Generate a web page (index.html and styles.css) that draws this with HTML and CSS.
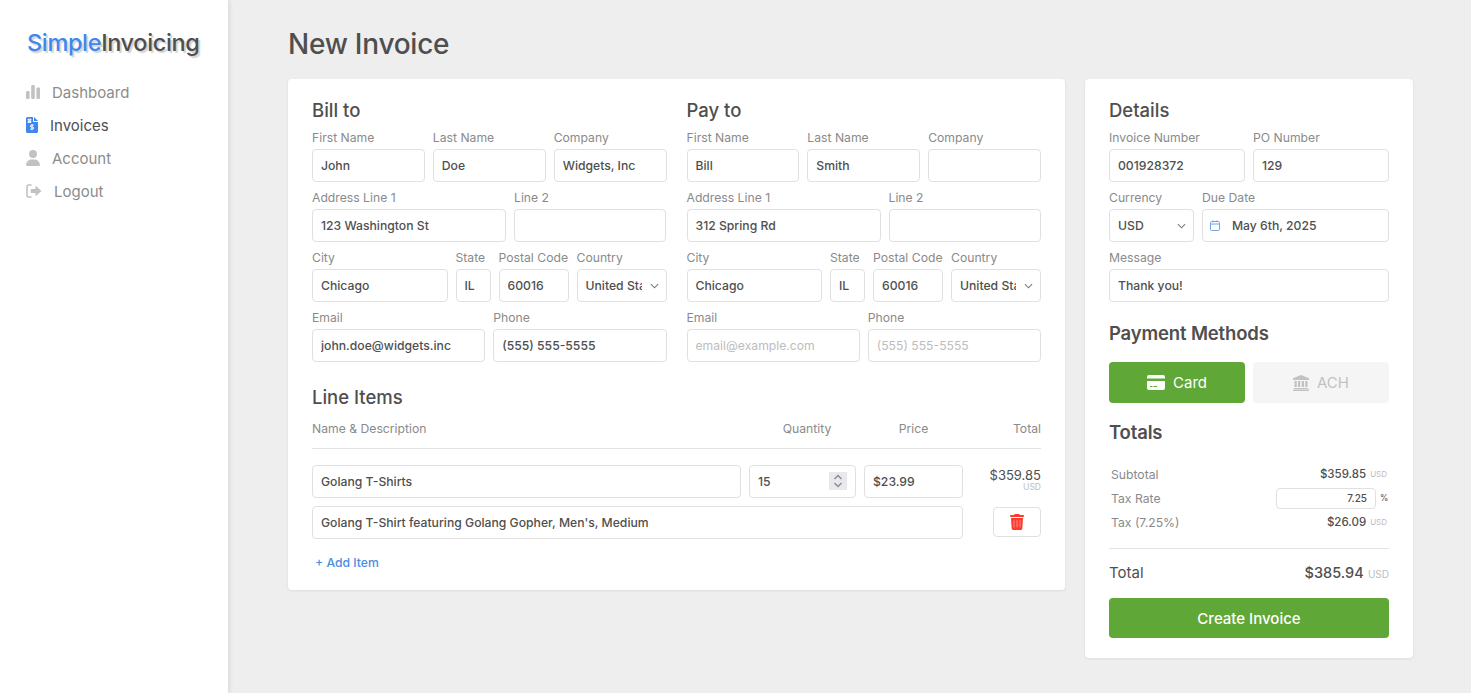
FILE: index.html
```html
<!DOCTYPE html>
<html lang="en">
<head>
    <meta charset="UTF-8">
    <meta name="viewport" content="width=device-width, initial-scale=1.0">
    <title>New Invoice - SimpleInvoicing</title>
    <link rel="stylesheet" href="styles.css">
</head>
<body>
    <aside class="sidebar">
        <div class="logo"><span class="logo-blue">Simple</span>Invoicing</div>
        <nav class="nav">
            <a class="nav-item">
                <svg class="nav-icon icon-chart" viewBox="0 0 14 14"><rect x="0" y="6" width="3.6" height="8" rx="1.2"/><rect x="5.2" y="0" width="3.6" height="14" rx="1.2"/><rect x="10.4" y="2.5" width="3.6" height="11.5" rx="1.2"/></svg>
                Dashboard
            </a>
            <a class="nav-item active">
                <svg class="nav-icon icon-file" viewBox="0 0 12 16"><path d="M1.5 0H7v4a1 1 0 0 0 1 1h4v9.5a1.5 1.5 0 0 1-1.5 1.5h-9A1.5 1.5 0 0 1 0 14.500V1.500A1.500 1.500 0 0 1 1.500 0zM8 0l4 4H8z"/><path class="file-mark" d="M2 2.200h3v1H2zM2 4.400h3v1H2zM7.700 8.100H5.400a.8.8 0 0 0 0 2h1.200a.8.8 0 0 1 0 2H4.300M6 7v6.200" /></svg>
                Invoices
            </a>
            <a class="nav-item">
                <svg class="nav-icon icon-user" viewBox="0 0 448 512"><path d="M224 256A128 128 0 1 0 224 0a128 128 0 1 0 0 256zm-45.700 48C79.800 304 0 383.800 0 482.300C0 498.700 13.300 512 29.700 512H418.300c16.400 0 29.700-13.300 29.700-29.700C448 383.800 368.200 304 269.700 304H178.300z"/></svg>
                Account
            </a>
            <a class="nav-item">
                <svg class="nav-icon icon-logout" viewBox="0 0 16 14"><path d="M5 1H2.500A1.500 1.500 0 0 0 1 2.500v9A1.500 1.500 0 0 0 2.500 13H5" fill="none" stroke="currentColor" stroke-width="1.600" stroke-linecap="round"/><path d="M10.200 2.300 15.500 7l-5.300 4.700a.5.5 0 0 1-.8-.4V9H5.500a.8.8 0 0 1-.8-.8V5.800a.8.8 0 0 1 .8-.8h3.900V2.700a.5.5 0 0 1 .8-.4z"/></svg>
                Logout
            </a>
        </nav>
    </aside>

    <main class="main">
        <h1>New Invoice</h1>
        <div class="layout">
            <section class="card card-main">
                <div class="parties">
                    <div>
                        <h2>Bill to</h2>
                        <div class="row cols-3">
                            <div class="field"><label>First Name</label><input type="text" value="John"></div>
                            <div class="field"><label>Last Name</label><input type="text" value="Doe"></div>
                            <div class="field"><label>Company</label><input type="text" value="Widgets, Inc"></div>
                        </div>
                        <div class="row cols-addr">
                            <div class="field"><label>Address Line 1</label><input type="text" value="123 Washington St"></div>
                            <div class="field"><label>Line 2</label><input type="text"></div>
                        </div>
                        <div class="row cols-city">
                            <div class="field"><label>City</label><input type="text" value="Chicago"></div>
                            <div class="field"><label>State</label><input type="text" value="IL"></div>
                            <div class="field"><label>Postal Code</label><input type="text" value="60016"></div>
                            <div class="field"><label>Country</label>
                                <div class="select-wrap">
                                    <select><option>United States</option></select>
                                    <svg class="chevron" viewBox="0 0 10 6"><path d="M1 1l4 4 4-4"/></svg>
                                </div>
                            </div>
                        </div>
                        <div class="row cols-2">
                            <div class="field"><label>Email</label><input type="text" value="john.doe@widgets.inc"></div>
                            <div class="field"><label>Phone</label><input type="text" value="(555) 555-5555"></div>
                        </div>
                    </div>
                    <div>
                        <h2>Pay to</h2>
                        <div class="row cols-3">
                            <div class="field"><label>First Name</label><input type="text" value="Bill"></div>
                            <div class="field"><label>Last Name</label><input type="text" value="Smith"></div>
                            <div class="field"><label>Company</label><input type="text"></div>
                        </div>
                        <div class="row cols-addr">
                            <div class="field"><label>Address Line 1</label><input type="text" value="312 Spring Rd"></div>
                            <div class="field"><label>Line 2</label><input type="text"></div>
                        </div>
                        <div class="row cols-city">
                            <div class="field"><label>City</label><input type="text" value="Chicago"></div>
                            <div class="field"><label>State</label><input type="text" value="IL"></div>
                            <div class="field"><label>Postal Code</label><input type="text" value="60016"></div>
                            <div class="field"><label>Country</label>
                                <div class="select-wrap">
                                    <select><option>United States</option></select>
                                    <svg class="chevron" viewBox="0 0 10 6"><path d="M1 1l4 4 4-4"/></svg>
                                </div>
                            </div>
                        </div>
                        <div class="row cols-2">
                            <div class="field"><label>Email</label><input type="text" placeholder="email@example.com"></div>
                            <div class="field"><label>Phone</label><input type="text" placeholder="(555) 555-5555"></div>
                        </div>
                    </div>
                </div>

                <h2 class="line-title">Line Items</h2>
                <div class="line-head">
                    <span>Name &amp; Description</span>
                    <span class="head-qty">Quantity</span>
                    <span class="head-price">Price</span>
                    <span class="head-total">Total</span>
                </div>
                <div class="line-item">
                    <input type="text" value="Golang T-Shirts">
                    <div class="qty-wrap">
                        <input type="text" value="15">
                        <svg class="spinner" viewBox="0 0 18 18"><path d="M5.500 7 9 3.500 12.500 7M5.500 11 9 14.500 12.500 11"/></svg>
                    </div>
                    <input type="text" value="$23.99">
                    <div class="line-total">
                        <div class="line-amount">$359.85</div>
                        <div class="currency-note">USD</div>
                    </div>
                    <input class="line-desc" type="text" value="Golang T-Shirt featuring Golang Gopher, Men's, Medium">
                    <button class="delete-btn" type="button">
                        <svg viewBox="0 0 448 512"><path d="M135.200 17.700L128 32H32C14.300 32 0 46.300 0 64S14.300 96 32 96H416c17.700 0 32-14.300 32-32s-14.300-32-32-32H320l-7.200-14.300C307.400 6.800 296.300 0 284.200 0H163.800c-12.100 0-23.200 6.800-28.600 17.700zM416 128H32L53.200 467c1.600 25.300 22.600 45 47.900 45H346.900c25.300 0 46.300-19.700 47.900-45L416 128z"/><path class="trash-lines" d="M128 200v230M224 200v230M320 200v230"/></svg>
                    </button>
                </div>
                <a class="add-item">+ Add Item</a>
            </section>

            <section class="card card-side">
                <h2>Details</h2>
                <div class="row cols-2">
                    <div class="field"><label>Invoice Number</label><input type="text" value="001928372"></div>
                    <div class="field"><label>PO Number</label><input type="text" value="129"></div>
                </div>
                <div class="row cols-due">
                    <div class="field"><label>Currency</label>
                        <div class="select-wrap">
                            <select><option>USD</option></select>
                            <svg class="chevron" viewBox="0 0 10 6"><path d="M1 1l4 4 4-4"/></svg>
                        </div>
                    </div>
                    <div class="field"><label>Due Date</label>
                        <div class="date-wrap">
                            <svg class="calendar" viewBox="0 0 10 11"><rect x=".5" y="1.500" width="9" height="9" rx="1.200"/><path d="M.5 4h9M3 .3v2M7 .3v2"/></svg>
                            <input type="text" value="May 6th, 2025">
                        </div>
                    </div>
                </div>
                <div class="row">
                    <div class="field"><label>Message</label><input type="text" value="Thank you!"></div>
                </div>

                <h2 class="payment-title">Payment Methods</h2>
                <div class="pay-buttons">
                    <button class="pay-btn pay-active" type="button">
                        <svg class="pay-icon" viewBox="0 0 18 15"><path d="M2 0h14a2 2 0 0 1 2 2v1.500H0V2a2 2 0 0 1 2-2zM0 6h18v7a2 2 0 0 1-2 2H2a2 2 0 0 1-2-2zM3 11v1h2.500v-1zm3.500 0v1H10v-1z" fill-rule="evenodd"/></svg>
                        Card
                    </button>
                    <button class="pay-btn" type="button">
                        <svg class="bank-icon" viewBox="0 0 16 16"><path d="M8 0l8 3.300V5H0V3.300zM1.500 6h2.300v6H1.500zM5 6h2.300v6H5zm3.700 0H11v6H8.700zm3.500 0h2.300v6h-2.300zM1 13h14v1H1zM0 14.600h16V16H0z"/></svg>
                        ACH
                    </button>
                </div>

                <h2 class="totals-title">Totals</h2>
                <div class="totals">
                    <div class="totals-row">
                        <span>Subtotal</span>
                        <span class="totals-value">$359.85 <small>USD</small></span>
                    </div>
                    <div class="totals-row">
                        <span>Tax Rate</span>
                        <span class="totals-value"><input class="tax-input" type="text" value="7.25"> <small class="percent">%</small></span>
                    </div>
                    <div class="totals-row">
                        <span>Tax (7.25%)</span>
                        <span class="totals-value">$26.09 <small>USD</small></span>
                    </div>
                </div>
                <div class="grand-total">
                    <span>Total</span>
                    <span><strong>$385.94</strong> <small>USD</small></span>
                </div>
                <button class="create-btn" type="button">Create Invoice</button>
            </section>
        </div>
    </main>
</body>
</html>
```

FILE: styles.css
```css
* {
    box-sizing: border-box;
}
body {
    font-family: Inter, "Noto Sans", sans-serif;
    margin: 0;
    height: 693px;
    overflow: hidden;
    display: flex;
    background-color: #eeeeee;
    color: #4f4f4f;
}
.sidebar {
    width: 228px;
    flex-shrink: 0;
    background: white;
    box-shadow: 2px 0 4px rgba(0, 0, 0, 0.08);
    padding: 29px 0 0 26px;
}
.logo {
    font-size: 23.5px;
    line-height: 28px;
    font-weight: 500;
    letter-spacing: -0.35px;
    margin-left: 1px;
    text-shadow: 2px 2px 1px #d4d4d4;
}
.logo-blue {
    color: #3f86ee;
}
.nav {
    margin-top: 23px;
    display: flex;
    flex-direction: column;
    gap: 9px;
}
.nav-item {
    display: flex;
    align-items: center;
    gap: 12px;
    height: 24px;
    font-size: 15px;
    color: #8c8c8c;
}
.nav-item.active {
    color: #4f4f4f;
}
.nav-icon {
    fill: #c2c2c2;
    color: #c2c2c2;
    flex-shrink: 0;
}
.icon-chart {
    width: 14px;
    height: 14px;
}
.icon-file {
    width: 12px;
    height: 16px;
    fill: #3f86ee;
}
.file-mark {
    fill: none;
    stroke: white;
    stroke-width: 1;
}
.icon-user {
    width: 14px;
    height: 16px;
}
.icon-logout {
    width: 16px;
    height: 14px;
}
.main {
    flex: 1;
    padding: 25px 58px 0 60px;
    min-width: 0;
}
h1 {
    font-size: 28px;
    line-height: 38px;
    font-weight: 500;
    margin: 0 0 16px;
    letter-spacing: -0.25px;
}
h2 {
    font-size: 18.5px;
    line-height: 24px;
    font-weight: 500;
    margin: 0 0 7px;
}
.layout {
    display: flex;
    align-items: flex-start;
    gap: 20px;
}
.card {
    background: white;
    border-radius: 4px;
    box-shadow: 0 1px 3px rgba(0, 0, 0, 0.08);
    padding: 19px 24px 20px;
}
.card-main {
    width: 777px;
    height: 511px;
}
.card-side {
    width: 328px;
    height: 579px;
}
.parties {
    display: grid;
    grid-template-columns: 1fr 1fr;
    gap: 20px;
}
.row {
    display: grid;
    gap: 8px;
    margin-bottom: 7px;
}
.cols-3 {
    grid-template-columns: 1fr 1fr 1fr;
}
.cols-2 {
    grid-template-columns: 1fr 1fr;
}
.cols-addr {
    grid-template-columns: 56fr 44fr;
}
.cols-city {
    grid-template-columns: 1fr 35px 70px 90px;
}
.cols-due {
    grid-template-columns: 85px 1fr;
}
.field {
    min-width: 0;
}
label {
    display: block;
    font-size: 12.2px;
    line-height: 16px;
    padding-top: 1px;
    margin-bottom: 3px;
    color: #8a8a8a;
    white-space: nowrap;
}
input, select {
    font-family: inherit;
    width: 100%;
    height: 33px;
    border: 1px solid #e0e0e0;
    border-radius: 4px;
    padding: 0 8px;
    font-size: 12.2px;
    font-weight: 500;
    color: #4f4f4f;
    background: white;
    outline: none;
}
input::placeholder {
    color: #bdbdbd;
    font-weight: 400;
}
select {
    appearance: none;
    padding-right: 24px;
}
.select-wrap, .date-wrap, .qty-wrap {
    position: relative;
}
.chevron {
    position: absolute;
    right: 8px;
    top: 14px;
    width: 9px;
    height: 6px;
    fill: none;
    stroke: #777777;
    stroke-width: 1.2;
}
.calendar {
    position: absolute;
    left: 8px;
    top: 11px;
    width: 10px;
    height: 11px;
    fill: none;
    stroke: #6fa3f0;
    stroke-width: 1;
}
.date-wrap input {
    padding-left: 29px;
}
.line-title {
    margin: 16px 0 12px;
}
.line-head {
    display: grid;
    grid-template-columns: 1fr 107px 99px 70px;
    gap: 8px;
    font-size: 12.2px;
    line-height: 16px;
    color: #8a8a8a;
    padding-bottom: 11px;
    border-bottom: 1px solid #e2e2e2;
}
.head-qty {
    text-align: center;
    padding-left: 9px;
}
.head-price {
    text-align: center;
}
.head-total {
    text-align: right;
}
.line-item {
    display: grid;
    grid-template-columns: 1fr 107px 99px 70px;
    gap: 8px;
    margin-top: 16px;
    align-items: center;
}
.line-desc {
    grid-column: 1 / 4;
}
.spinner {
    position: absolute;
    right: 9px;
    top: 7px;
    width: 18px;
    height: 18px;
    background: #e8e8ed;
    fill: none;
    stroke: #8a8a8a;
    stroke-width: 1.3;
}
.line-total {
    text-align: right;
}
.line-amount {
    font-size: 13px;
    line-height: 15px;
    margin-top: -3px;
}
.currency-note {
    font-size: 8.5px;
    line-height: 9px;
    color: #bdbdbd;
}
.delete-btn {
    justify-self: end;
    width: 48px;
    height: 30px;
    margin-top: -1px;
    background: white;
    border: 1px solid #e0e0e0;
    border-radius: 4px;
    padding: 0;
    display: flex;
    align-items: center;
    justify-content: center;
}
.delete-btn svg {
    width: 14px;
    height: 16px;
    fill: #ff3b30;
}
.trash-lines {
    fill: none;
    stroke: #ffffff;
    stroke-width: 30;
    opacity: 0.45;
}
.add-item {
    display: block;
    margin: 16px 0 0 3px;
    font-size: 12.2px;
    line-height: 16px;
    font-weight: 500;
    color: #4a8de0;
}
.payment-title {
    margin: 19px 0 17px;
    font-weight: 600;
    letter-spacing: -0.15px;
}
.pay-buttons {
    display: grid;
    grid-template-columns: 1fr 1fr;
    gap: 8px;
}
.pay-btn {
    font-family: inherit;
    height: 41px;
    border: none;
    border-radius: 4px;
    background: #f5f5f5;
    color: #c2c2c2;
    font-size: 15px;
    display: flex;
    align-items: center;
    justify-content: center;
    gap: 8px;
}
.pay-active {
    background: #5fa737;
    color: white;
}
.pay-icon {
    width: 18px;
    height: 15px;
    fill: currentColor;
}
.bank-icon {
    width: 16px;
    height: 16px;
    fill: currentColor;
}
.totals-title {
    margin: 17px 0 18px;
    font-weight: 600;
    letter-spacing: -0.15px;
}
.totals {
    padding: 0 2px;
}
.totals-row {
    display: flex;
    align-items: center;
    justify-content: space-between;
    height: 24px;
    font-size: 12.2px;
    color: #8a8a8a;
}
.totals-value {
    color: #4f4f4f;
    font-size: 11.5px;
    font-weight: 500;
    display: flex;
    align-items: center;
    gap: 4px;
}
small {
    font-size: 8px;
    font-weight: 400;
    color: #bdbdbd;
}
.tax-input {
    width: 100px;
    height: 21px;
    font-size: 10px;
    text-align: right;
    padding: 0 8px;
}
small.percent {
    width: 7px;
    font-size: 8.5px;
    text-align: right;
    color: #4f4f4f;
}
.grand-total {
    display: flex;
    justify-content: space-between;
    align-items: center;
    height: 36px;
    margin-top: 14px;
    padding-top: 11px;
    border-top: 1px solid #e2e2e2;
    font-size: 15px;
}
.grand-total strong {
    font-weight: 500;
    font-size: 14.5px;
}
.grand-total small {
    font-size: 10px;
}
.create-btn {
    font-family: inherit;
    display: block;
    width: 100%;
    height: 40px;
    margin-top: 14px;
    border: none;
    border-radius: 4px;
    background: #5fa737;
    color: white;
    font-size: 15px;
    font-weight: 500;
}
```
